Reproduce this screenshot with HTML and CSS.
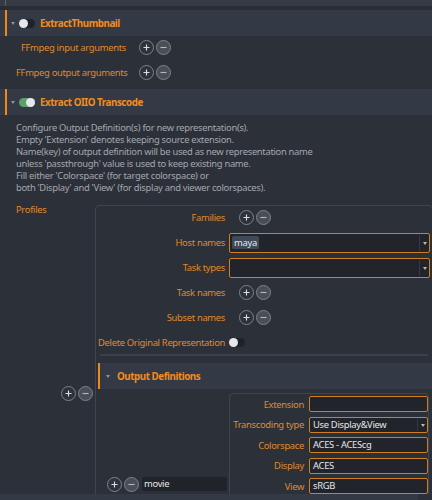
FILE: index.html
```html
<!DOCTYPE html>
<html>
<head>
<meta charset="utf-8">
<link rel="stylesheet" href="styles.css">
</head>
<body>
<div class="main">
  <div class="top"><div class="vline"></div></div>
  <div class="gapband"></div>

  <section class="group">
    <div class="ghead"><span class="bar"></span><span class="caret"></span><span class="toggle"></span><span class="gtitle">ExtractThumbnail</span></div>
    <div class="g1body">
      <span class="lbl">FFmpeg input arguments</span>
      <span class="btns"><span class="cb plus"><svg viewBox="0 0 15 15"><path d="M7.5 4v7M4 7.5h7"/></svg></span><span class="cb minus"><svg viewBox="0 0 15 15"><path d="M4 7.5h7"/></svg></span></span>
      <span class="lbl">FFmpeg output arguments</span>
      <span class="btns"><span class="cb plus"><svg viewBox="0 0 15 15"><path d="M7.5 4v7M4 7.5h7"/></svg></span><span class="cb minus"><svg viewBox="0 0 15 15"><path d="M4 7.5h7"/></svg></span></span>
    </div>
  </section>

  <section class="group">
    <div class="ghead"><span class="bar"></span><span class="caret"></span><span class="toggle on"></span><span class="gtitle">Extract OIIO Transcode</span></div>
    <div class="g2body">
      <p class="desc">Configure Output Definition(s) for new representation(s).<br>Empty 'Extension' denotes keeping source extension.<br>Name(key) of output definition will be used as new representation name<br>unless 'passthrough' value is used to keep existing name.<br>Fill either 'Colorspace' (for target colorspace) or<br>both 'Display' and 'View' (for display and viewer colorspaces).</p>

      <div class="profiles">
        <span class="lbl plabel">Profiles</span>
        <div class="pitem">
          <span class="btns"><span class="cb plus"><svg viewBox="0 0 15 15"><path d="M7.5 4v7M4 7.5h7"/></svg></span><span class="cb minus"><svg viewBox="0 0 15 15"><path d="M4 7.5h7"/></svg></span></span>
          <div class="pbox">
            <div class="pgrid">
              <span class="lbl">Families</span>
              <span class="btns ind"><span class="cb plus"><svg viewBox="0 0 15 15"><path d="M7.5 4v7M4 7.5h7"/></svg></span><span class="cb minus"><svg viewBox="0 0 15 15"><path d="M4 7.5h7"/></svg></span></span>
              <span class="lbl">Host names</span>
              <div class="combo"><span class="chip">maya</span><span class="cdiv"></span><span class="carr"></span></div>
              <span class="lbl">Task types</span>
              <div class="combo"><span class="cdiv"></span><span class="carr"></span></div>
              <span class="lbl">Task names</span>
              <span class="btns ind"><span class="cb plus"><svg viewBox="0 0 15 15"><path d="M7.5 4v7M4 7.5h7"/></svg></span><span class="cb minus"><svg viewBox="0 0 15 15"><path d="M4 7.5h7"/></svg></span></span>
              <span class="lbl">Subset names</span>
              <span class="btns ind"><span class="cb plus"><svg viewBox="0 0 15 15"><path d="M7.5 4v7M4 7.5h7"/></svg></span><span class="cb minus"><svg viewBox="0 0 15 15"><path d="M4 7.5h7"/></svg></span></span>
              <span class="lbl">Delete Original Representation</span>
              <span class="tgwrap"><span class="toggle"></span></span>
            </div>
            <div class="hsep"></div>
            <div class="ohead"><span class="bar"></span><span class="caret"></span><span class="gtitle">Output Definitions</span></div>
            <div class="obody">
              <div class="key">
                <span class="btns"><span class="cb plus"><svg viewBox="0 0 15 15"><path d="M7.5 4v7M4 7.5h7"/></svg></span><span class="cb minus"><svg viewBox="0 0 15 15"><path d="M4 7.5h7"/></svg></span></span>
                <span class="keyin">movie</span>
              </div>
              <div class="vbox">
                <span class="lbl">Extension</span><span class="inp"></span>
                <span class="lbl">Transcoding type</span><span class="inp ocombo">Use Display&amp;View<span class="cdiv"></span><span class="carr"></span></span>
                <span class="lbl">Colorspace</span><span class="inp">ACES - ACEScg</span>
                <span class="lbl">Display</span><span class="inp">ACES</span>
                <span class="lbl">View</span><span class="inp">sRGB</span>
              </div>
            </div>
          </div>
        </div>
      </div>
    </div>
  </section>
</div>
<div class="foot"><span class="fpatch"></span></div>
</body>
</html>
```

FILE: styles.css
```css
* { box-sizing: border-box; margin: 0; padding: 0; }
html, body { background: #2c3039; }
body {
  width: 432px;
  height: 500px;
  overflow: hidden;
  font-family: "Noto Sans", "Open Sans", sans-serif;
  font-size: 9.4px;
  letter-spacing: -0.3px;
  color: #a3a7ae;
}
.main { height: 494px; overflow: hidden; }
.top { height: 6px; background: #353a44; padding-left: 5px; }
.top .vline { width: 1px; height: 6px; background: #5c616a; }
.gapband { height: 4px; background: #2a2d35; }

.ghead {
  height: 26px;
  background: #343a45;
  display: flex;
  align-items: center;
  padding-left: 5px;
}
.bar { width: 2px; align-self: stretch; background: #f0891a; }
.caret {
  margin-left: 4px;
  width: 0; height: 0;
  border-left: 2.5px solid transparent;
  border-right: 2.5px solid transparent;
  border-top: 3px solid #8e939b;
}
.toggle {
  margin-left: 4px;
  width: 16px; height: 9px;
  border-radius: 5px;
  background: #1f2228;
  position: relative;
  display: inline-block;
}
.toggle::after {
  content: "";
  position: absolute;
  top: 0; left: 0;
  width: 9px; height: 9px;
  border-radius: 50%;
  background: #e6e7ea;
}
.toggle.on { background: #5d9e6c; }
.toggle.on::after { left: 7px; }
.gtitle {
  margin-left: 5px;
  font-weight: bold;
  color: #f28c1c;
  font-size: 9.8px;
  letter-spacing: -0.45px;
}

.lbl { color: #e08a2b; text-align: right; white-space: nowrap; }

.btns { display: flex; gap: 2px; align-items: center; }
.cb {
  width: 15px; height: 15px;
  border-radius: 50%;
  border: 1px solid #7d828b;
  display: flex;
}
.cb svg { width: 13px; height: 13px; }
.cb path { stroke-width: 1.3; fill: none; }
.cb.plus { background: #2e323b; }
.cb.plus path { stroke: #dcdde0; }
.cb.minus { background: #4a4e57; }
.cb.minus path { stroke: #b3b6bb; }

.g1body {
  height: 53px;
  padding: 1px 0 0 16px;
  display: grid;
  grid-template-columns: 110px auto;
  grid-auto-rows: 20px;
  row-gap: 5px;
  column-gap: 13px;
  align-items: center;
  justify-content: start;
}

.g2body { padding-top: 7px; }
.desc { padding-left: 16px; line-height: 12px; color: #a3a7ae; }

.profiles {
  margin-top: 11px;
  display: grid;
  grid-template-columns: 45px 372px;
  padding-left: 16px;
}
.plabel { text-align: left; line-height: 12px; margin-top: -1px; }
.pitem { display: flex; align-items: center; gap: 2px; }
.pbox {
  width: 338px;
  min-height: 376px;
  border: 1px solid #3f444e;
  border-radius: 4px;
  padding: 1px 0 0 1px;
}
.pgrid {
  display: grid;
  grid-template-columns: 128px 1fr;
  grid-auto-rows: 21px;
  row-gap: 4px;
  column-gap: 4px;
  align-items: center;
  padding-right: 2px;
}
.btns.ind { margin-left: 10px; }
.combo {
  height: 20px;
  border: 1px solid #cf7f1f;
  border-radius: 2px;
  background: #21242b;
  position: relative;
  display: flex;
  align-items: center;
  padding-left: 2px;
}
.chip {
  background: #3e4a58;
  color: #e6e6e6;
  border-radius: 2px;
  padding: 0 2px;
  line-height: 13px;
}
.cdiv { position: absolute; right: 9px; top: 1px; bottom: 1px; width: 1px; background: #343840; }
.carr {
  position: absolute; right: 2px; top: 50%; margin-top: -1px;
  width: 0; height: 0;
  border-left: 2.5px solid transparent;
  border-right: 2.5px solid transparent;
  border-top: 3px solid #b6b9be;
}
.tgwrap { display: flex; align-items: center; }
.tgwrap .toggle { margin-left: 0; }

.hsep { height: 2px; background: #3a3f49; margin: 1px 4px 0 3px; }
.ohead {
  margin: 7px 0 0 1px;
  height: 26px;
  background: #343a45;
  display: flex;
  align-items: center;
}
.ohead .caret { margin-left: 6px; }
.ohead .gtitle { margin-left: 7px; }

.obody {
  padding: 4px 0 0 10px;
  display: flex;
  align-items: center;
  gap: 2px;
}
.key { display: flex; align-items: center; gap: 3px; }
.keyin {
  width: 85px; height: 14px;
  background: #20232a;
  color: #e6e6e6;
  padding-left: 2px;
  line-height: 14px;
  border-radius: 2px;
}
.vbox {
  width: 200px;
  min-height: 182px;
  border: 1px solid #3f444e;
  border-radius: 4px;
  padding: 2px 0 0 2px;
  display: grid;
  grid-template-columns: 72px 119px;
  grid-auto-rows: 16px;
  row-gap: 4.5px;
  column-gap: 5px;
  align-content: start;
  align-items: center;
}
.inp {
  height: 16px;
  border: 1px solid #cf7f1f;
  border-radius: 2px;
  background: #21242b;
  color: #e6e6e6;
  padding-left: 3px;
  line-height: 14px;
  position: relative;
}
.ocombo .cdiv { right: 9px; }

.foot { height: 6px; background: #343a45; position: relative; }
.fpatch { position: absolute; right: 0; top: 0; width: 14px; height: 6px; background: #2c3039; }
```
